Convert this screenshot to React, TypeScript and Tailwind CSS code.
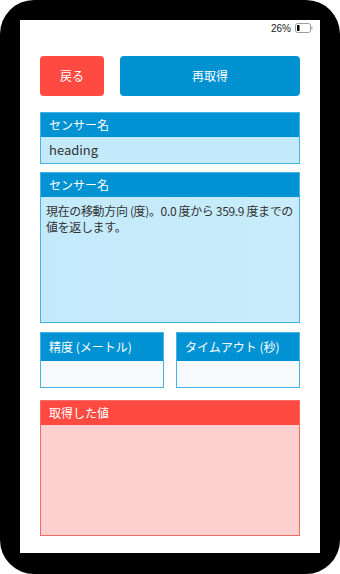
import React from 'react';

const jp = { fontFamily: '"Noto Sans CJK JP", "Noto Sans", sans-serif' };

function Battery() {
    return (
        <svg width="18" height="10" viewBox="0 0 18 10">
            <rect x="0.5" y="0.5" width="15" height="9" rx="2" fill="none" stroke="#9a9a9a" strokeWidth="1" />
            <rect x="2" y="2" width="2.5" height="6" rx="0.5" fill="#000" />
            <rect x="16.2" y="3.5" width="1.3" height="3" rx="0.5" fill="#b0b0b0" />
        </svg>
    );
}

function BlueBox({
    title,
    bodyClass,
    children,
    headClass = 'h-[24px]',
}: {
    title: string;
    bodyClass: string;
    children?: React.ReactNode;
    headClass?: string;
}) {
    return (
        <div className="flex flex-col border border-[#45b2e4]">
            <div className={`${headClass} bg-[#0092d2] text-white text-[12px] flex items-center pl-[8px]`}>
                {title}
            </div>
            <div className={bodyClass}>{children}</div>
        </div>
    );
}

export default function App() {
    return (
        <div className="w-[340px] h-[574px] bg-white" style={jp}>
            <div className="w-[340px] h-[574px] bg-black rounded-[34px] pt-[20px] px-[20px] pb-[21px]">
                <div className="w-full h-full bg-white flex flex-col px-[20px]">
                    <div className="h-[16px] flex items-center justify-end gap-[4px] -mr-[13px]">
                        <span className="text-[10px] text-[#222]" style={{ fontFamily: '"Liberation Sans", sans-serif' }}>
                            26%
                        </span>
                        <Battery />
                    </div>

                    <div className="flex gap-[16px] mt-[20px]">
                        <button className="w-[64px] h-[40px] bg-[#ff4a42] rounded-[4px] text-white text-[12px]">
                            戻る
                        </button>
                        <button className="flex-1 h-[40px] bg-[#0091d1] rounded-[4px] text-white text-[12px]">
                            再取得
                        </button>
                    </div>

                    <div className="mt-[16px]">
                        <BlueBox
                            title="センサー名"
                            bodyClass="h-[26px] bg-[#c3eafb] text-[13px] text-[#333] flex items-center pl-[8px]"
                        >
                            heading
                        </BlueBox>
                    </div>

                    <div className="mt-[8px]">
                        <BlueBox
                            title="センサー名"
                            bodyClass="h-[125px] bg-gradient-to-r from-[#c3eafb] to-[#c8ecfb] text-[12px] leading-[16px] tracking-[-0.35px] text-[#333] px-[5px] pt-[6px]"
                        >
                            現在の移動方向 (度)。0.0 度から 359.9 度までの値を返します。
                        </BlueBox>
                    </div>

                    <div className="mt-[9px] grid grid-cols-2 gap-[12px]">
                        <BlueBox title="精度 (メートル)" headClass="h-[28px]" bodyClass="h-[26px] bg-[#f8fbfd]" />
                        <BlueBox title="タイムアウト (秒)" headClass="h-[28px]" bodyClass="h-[26px] bg-[#f8fbfd]" />
                    </div>

                    <div className="mt-[12px] flex flex-col border border-[#f26a66]">
                        <div className="h-[24px] bg-[#ff4a42] text-white text-[12px] flex items-center pl-[8px]">
                            取得した値
                        </div>
                        <div className="h-[110px] bg-[#fdcfce]" />
                    </div>
                </div>
            </div>
        </div>
    );
}
